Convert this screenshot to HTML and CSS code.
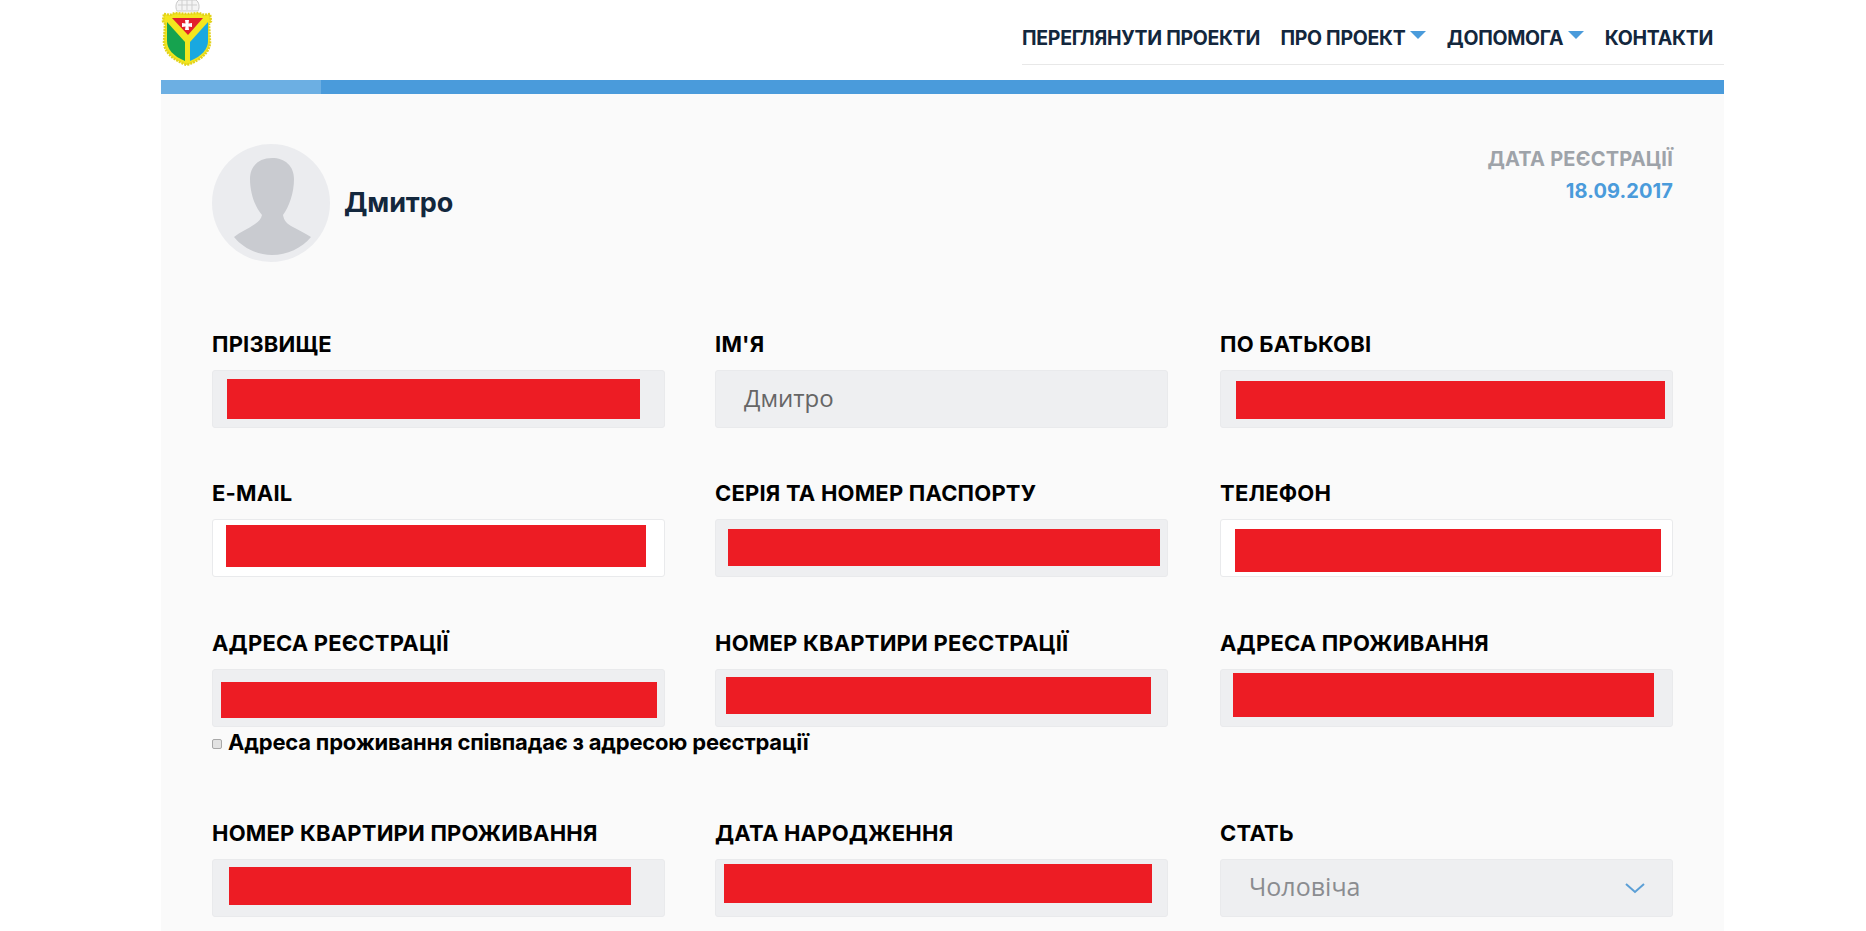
FILE: index.html
```html
<!DOCTYPE html>
<html lang="uk">
<head>
  <meta charset="UTF-8">
  <title>Профіль</title>
  <link rel="stylesheet" href="styles.css">
</head>
<body>
  <div class="page">
    <header class="top">
      <svg class="logo" viewBox="0 0 52 66" aria-hidden="true">
        <path d="M16 11C14 7 15 2 18 0H35C38 2 39 7 37 11z" fill="#f4f4f4" stroke="#c9c9c9" stroke-width="1"/>
        <path d="M17 5h19M21 0v10M26 0v10M31 0v10" stroke="#cfcfcf" stroke-width="1"/>
        <path d="M3 14l6 1 5-2 12 1 12-1 5 2 6-1 1 7-2 3 1 18c0 10-9 18-23 23C12 60 3 52 3 42l1-18-2-3z" fill="#f3e61e" stroke="#e2d21c" stroke-width="2.5" stroke-dasharray="2 1"/>
        <path d="M6 22l18 20v19C12 56 6 49 6 41z" fill="#16a34f"/>
        <path d="M47 22L29 42v19c12-5 18-12 18-20z" fill="#19a8e0"/>
        <path d="M11 18h31L27 35z" fill="#e2202c"/>
        <path d="M24 20h4l-.5 3.500 3.500-.5v4l-3.500-.5.5 3.500h-4l.5-3.500-3.500.5v-4l3.500.5z" fill="#fff"/>
      </svg>
      <nav class="menu">
        <a href="#">ПЕРЕГЛЯНУТИ ПРОЕКТИ</a>
        <a href="#" class="has-sub">ПРО ПРОЕКТ</a>
        <a href="#" class="has-sub">ДОПОМОГА</a>
        <a href="#">КОНТАКТИ</a>
      </nav>
    </header>

    <div class="tabs"><div class="tab-active"></div></div>

    <main class="panel">
      <section class="profile">
        <div class="user">
          <svg class="avatar" viewBox="0 0 118 118" aria-hidden="true">
            <circle cx="59" cy="59" r="59" fill="#ebecef"/>
            <path d="M60 14C73 14 82 22 82 35C82 49 77 63 71 71C72 76 74 79 79 82C86 86 93 89 99 93C90 104 75 111 60 111C45 111 31 104 22 93C28 88 36 85 43 80C47 77 49 75 50 71C43 63 38 49 38 35C38 22 47 14 60 14Z" fill="#c9cbd0"/>
          </svg>
          <div class="user-name">Дмитро</div>
        </div>
        <div class="reg-date">
          <div class="reg-label">ДАТА РЕЄСТРАЦІЇ</div>
          <div class="reg-value">18.09.2017</div>
        </div>
      </section>

      <form class="fields">
        <div class="field">
          <label>ПРІЗВИЩЕ</label>
          <div class="box"><i class="redact r-surname"></i></div>
        </div>
        <div class="field">
          <label>ІМ'Я</label>
          <div class="box">Дмитро</div>
        </div>
        <div class="field">
          <label>ПО БАТЬКОВІ</label>
          <div class="box"><i class="redact r-patronymic"></i></div>
        </div>

        <div class="field">
          <label>E-MAIL</label>
          <div class="box box-white"><i class="redact r-email"></i></div>
        </div>
        <div class="field">
          <label>СЕРІЯ ТА НОМЕР ПАСПОРТУ</label>
          <div class="box"><i class="redact r-passport"></i></div>
        </div>
        <div class="field">
          <label>ТЕЛЕФОН</label>
          <div class="box box-white"><i class="redact r-phone"></i></div>
        </div>

        <div class="field">
          <label>АДРЕСА РЕЄСТРАЦІЇ</label>
          <div class="box"><i class="redact r-regaddr"></i></div>
          <div class="same-address">
            <input type="checkbox" disabled>
            <span>Адреса проживання співпадає з адресою реєстрації</span>
          </div>
        </div>
        <div class="field">
          <label>НОМЕР КВАРТИРИ РЕЄСТРАЦІЇ</label>
          <div class="box"><i class="redact r-regflat"></i></div>
        </div>
        <div class="field">
          <label>АДРЕСА ПРОЖИВАННЯ</label>
          <div class="box"><i class="redact r-liveaddr"></i></div>
        </div>

        <div class="field">
          <label>НОМЕР КВАРТИРИ ПРОЖИВАННЯ</label>
          <div class="box"><i class="redact r-liveflat"></i></div>
        </div>
        <div class="field">
          <label>ДАТА НАРОДЖЕННЯ</label>
          <div class="box"><i class="redact r-birth"></i></div>
        </div>
        <div class="field">
          <label>СТАТЬ</label>
          <div class="box box-select">
            <span>Чоловіча</span>
            <svg class="chevron" viewBox="0 0 20 11" aria-hidden="true"><path d="M1 1l9 8 9-8" fill="none" stroke="#5b9fd6" stroke-width="2"/></svg>
          </div>
        </div>
      </form>
    </main>
  </div>
</body>
</html>
```

FILE: styles.css
```css
:root {
  --blue: #4a9bdb;
  --box-bg: #eeeff1;
  --red: #ed1c24;
}
html, body { margin:0; height:100%; background:#fff; overflow:hidden; }
body { font-family:Inter, "Noto Sans", sans-serif; color:#000; }
.page { width:1563px; margin-left:161px; }

/* header */
.top { height:80px; display:flex; justify-content:space-between; align-items:flex-start; }
.logo { width:52px; height:66px; display:block; }
.menu { width:702px; height:65px; box-sizing:border-box; padding:12px 11px 0 0; border-bottom:1px solid #e8e8e8; display:flex; align-items:center; justify-content:space-between; }
.menu a { color:#13273d; text-decoration:none; font-size:19.5px; font-weight:700; letter-spacing:-0.3px; white-space:nowrap; }
.has-sub { display:flex; align-items:center; gap:5px; }
.has-sub::after { content:""; width:0; height:0; border-left:8.5px solid transparent; border-right:8.5px solid transparent; border-top:8px solid var(--blue); margin-top:-6px; }

.tabs { height:14px; background:var(--blue); }
.tab-active { width:160px; height:14px; background:#6cafe3; }

/* panel */
.panel { background:#fafafa; padding:50px 51px 40px; height:837px; box-sizing:border-box; }
.profile { display:flex; justify-content:space-between; align-items:flex-start; height:118px; margin-bottom:68px; }
.user { display:flex; align-items:center; gap:14px; }
.avatar { width:118px; height:118px; display:block; }
.user-name { font-size:27px; font-weight:700; color:#13273d; letter-spacing:-0.1px; margin-top:-2px; }
.reg-date { text-align:right; padding-top:1px; }
.reg-label { font-size:20px; font-weight:700; color:#9ea3a9; line-height:28px; letter-spacing:0.2px; }
.reg-value { font-size:20px; font-weight:700; color:var(--blue); line-height:28px; margin-top:4px; letter-spacing:0.1px; }

/* form */
.fields { display:grid; grid-template-columns:503px 505px 453px; grid-template-rows:149px 150px 190px 150px; }
.field { width:453px; }
.field label { display:block; font-size:22px; font-weight:700; line-height:28px; margin-bottom:12px; letter-spacing:0.2px; white-space:nowrap; }
.box { position:relative; height:58px; box-sizing:border-box; background:var(--box-bg); border:1px solid #e9eaec; border-radius:3px; display:flex; align-items:center; padding:0 28px 4px; font-family:"Open Sans", sans-serif; font-size:24px; color:#666; }
.box-white { background:#fff; }
.box-select { justify-content:space-between; color:#8a8c90; padding-right:27px; font-size:25px; }
.chevron { width:20px; height:11px; display:block; margin-top:4px; }
.same-address { display:flex; align-items:center; gap:6px; margin-top:1px; font-size:22px; font-weight:700; line-height:28px; white-space:nowrap; letter-spacing:-0.2px; }
.same-address input { appearance:none; flex:none; box-sizing:border-box; width:10px; height:10px; margin:3px 0 0; background:#e2e2e2; border:1px solid #a8a8a8; border-radius:2px; }

/* blacked out personal data */
.redact { position:absolute; background:var(--red); }
.r-surname { left:14px; top:8px; width:413px; height:40px; }
.r-patronymic { left:15px; top:10px; width:429px; height:38px; }
.r-email { left:13px; top:5px; width:420px; height:42px; }
.r-passport { left:12px; top:9px; width:432px; height:37px; }
.r-phone { left:14px; top:9px; width:426px; height:43px; }
.r-regaddr { left:8px; top:12px; width:436px; height:36px; }
.r-regflat { left:10px; top:7px; width:425px; height:37px; }
.r-liveaddr { left:12px; top:3px; width:421px; height:44px; }
.r-liveflat { left:16px; top:7px; width:402px; height:38px; }
.r-birth { left:8px; top:4px; width:428px; height:39px; }
```
